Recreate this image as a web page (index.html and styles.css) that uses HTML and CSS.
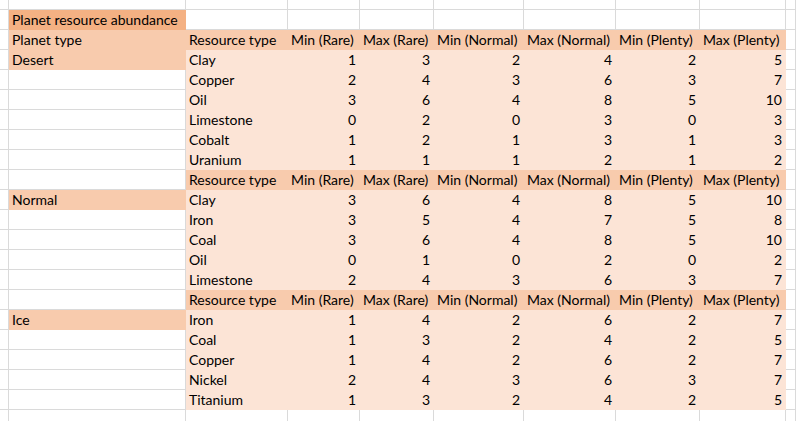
FILE: index.html
```html
<!DOCTYPE html>
<html>
<head>
<meta charset="utf-8">
<link rel="stylesheet" href="styles.css">
</head>
<body>
<div class="sheet">
  <div class="row first"><div></div><div></div><div></div><div></div><div></div><div></div><div></div><div></div><div></div><div></div></div>
  <div class="row"><div></div><div class="t">Planet resource abundance</div><div></div><div></div><div></div><div></div><div></div><div></div><div></div><div></div></div>
  <div class="row"><div></div><div class="h">Planet type</div><div class="h">Resource type</div><div class="h">Min (Rare)</div><div class="h">Max (Rare)</div><div class="h">Min (Normal)</div><div class="h">Max (Normal)</div><div class="h">Min (Plenty)</div><div class="h">Max (Plenty)</div><div></div></div>
  <div class="row"><div></div><div class="h">Desert</div><div class="d">Clay</div><div class="d n">1</div><div class="d n">3</div><div class="d n">2</div><div class="d n">4</div><div class="d n">2</div><div class="d n">5</div><div></div></div>
  <div class="row"><div></div><div></div><div class="d">Copper</div><div class="d n">2</div><div class="d n">4</div><div class="d n">3</div><div class="d n">6</div><div class="d n">3</div><div class="d n">7</div><div></div></div>
  <div class="row"><div></div><div></div><div class="d">Oil</div><div class="d n">3</div><div class="d n">6</div><div class="d n">4</div><div class="d n">8</div><div class="d n">5</div><div class="d n">10</div><div></div></div>
  <div class="row"><div></div><div></div><div class="d">Limestone</div><div class="d n">0</div><div class="d n">2</div><div class="d n">0</div><div class="d n">3</div><div class="d n">0</div><div class="d n">3</div><div></div></div>
  <div class="row"><div></div><div></div><div class="d">Cobalt</div><div class="d n">1</div><div class="d n">2</div><div class="d n">1</div><div class="d n">3</div><div class="d n">1</div><div class="d n">3</div><div></div></div>
  <div class="row"><div></div><div></div><div class="d">Uranium</div><div class="d n">1</div><div class="d n">1</div><div class="d n">1</div><div class="d n">2</div><div class="d n">1</div><div class="d n">2</div><div></div></div>
  <div class="row"><div></div><div></div><div class="h">Resource type</div><div class="h">Min (Rare)</div><div class="h">Max (Rare)</div><div class="h">Min (Normal)</div><div class="h">Max (Normal)</div><div class="h">Min (Plenty)</div><div class="h">Max (Plenty)</div><div></div></div>
  <div class="row"><div></div><div class="h">Normal</div><div class="d">Clay</div><div class="d n">3</div><div class="d n">6</div><div class="d n">4</div><div class="d n">8</div><div class="d n">5</div><div class="d n">10</div><div></div></div>
  <div class="row"><div></div><div></div><div class="d">Iron</div><div class="d n">3</div><div class="d n">5</div><div class="d n">4</div><div class="d n">7</div><div class="d n">5</div><div class="d n">8</div><div></div></div>
  <div class="row"><div></div><div></div><div class="d">Coal</div><div class="d n">3</div><div class="d n">6</div><div class="d n">4</div><div class="d n">8</div><div class="d n">5</div><div class="d n">10</div><div></div></div>
  <div class="row"><div></div><div></div><div class="d">Oil</div><div class="d n">0</div><div class="d n">1</div><div class="d n">0</div><div class="d n">2</div><div class="d n">0</div><div class="d n">2</div><div></div></div>
  <div class="row"><div></div><div></div><div class="d">Limestone</div><div class="d n">2</div><div class="d n">4</div><div class="d n">3</div><div class="d n">6</div><div class="d n">3</div><div class="d n">7</div><div></div></div>
  <div class="row"><div></div><div></div><div class="h">Resource type</div><div class="h">Min (Rare)</div><div class="h">Max (Rare)</div><div class="h">Min (Normal)</div><div class="h">Max (Normal)</div><div class="h">Min (Plenty)</div><div class="h">Max (Plenty)</div><div></div></div>
  <div class="row"><div></div><div class="h">Ice</div><div class="d">Iron</div><div class="d n">1</div><div class="d n">4</div><div class="d n">2</div><div class="d n">6</div><div class="d n">2</div><div class="d n">7</div><div></div></div>
  <div class="row"><div></div><div></div><div class="d">Coal</div><div class="d n">1</div><div class="d n">3</div><div class="d n">2</div><div class="d n">4</div><div class="d n">2</div><div class="d n">5</div><div></div></div>
  <div class="row"><div></div><div></div><div class="d">Copper</div><div class="d n">1</div><div class="d n">4</div><div class="d n">2</div><div class="d n">6</div><div class="d n">2</div><div class="d n">7</div><div></div></div>
  <div class="row"><div></div><div></div><div class="d">Nickel</div><div class="d n">2</div><div class="d n">4</div><div class="d n">3</div><div class="d n">6</div><div class="d n">3</div><div class="d n">7</div><div></div></div>
  <div class="row"><div></div><div></div><div class="d">Titanium</div><div class="d n">1</div><div class="d n">3</div><div class="d n">2</div><div class="d n">4</div><div class="d n">2</div><div class="d n">5</div><div></div></div>
  <div class="row"><div></div><div></div><div></div><div></div><div></div><div></div><div></div><div></div><div></div><div></div></div>
</div>
</body>
</html>
```
FILE: styles.css
```css
html, body {
  margin: 0;
  padding: 0;
  background: #ffffff;
  overflow: hidden;
}
.sheet {
  width: 796px;
  height: 421px;
  overflow: hidden;
  font-family: Lato, "Liberation Sans", sans-serif;
  font-size: 14px;
  color: #000000;
}
.row {
  display: grid;
  grid-template-columns: 9px 177px 102px 72px 74px 90px 92px 84px 86px 1fr;
  height: 20px;
}
.row.first {
  height: 10px;
}
.row > div {
  box-sizing: border-box;
  border-right: 1px solid #dadada;
  border-bottom: 1px solid #dadada;
  padding: 0 3px;
  line-height: 19px;
  white-space: nowrap;
  overflow: hidden;
}
.row > div.t {
  background: #f4b183;
  border-color: #f4b183;
}
.row > div.h {
  background: #f8cbad;
  border-color: #f8cbad;
}
.row > div.d {
  background: #fce4d6;
  border-color: #fce4d6;
}
.row > div.n {
  text-align: right;
}
```
